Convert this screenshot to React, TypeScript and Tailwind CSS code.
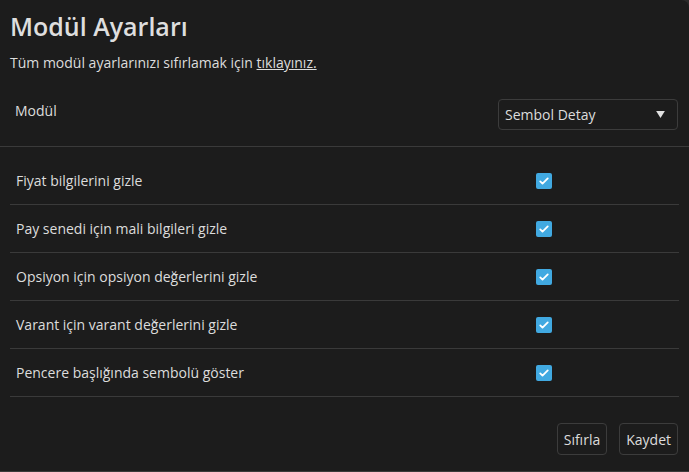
import { useState } from "react";

const ROWS = [
  "Fiyat bilgilerini gizle",
  "Pay senedi için mali bilgileri gizle",
  "Opsiyon için opsiyon değerlerini gizle",
  "Varant için varant değerlerini gizle",
  "Pencere başlığında sembolü göster",
];

function CheckBox({ checked, onChange }: { checked: boolean; onChange: () => void }) {
  return (
    <button
      type="button"
      onClick={onChange}
      className={`w-4 h-4 rounded-[2px] flex items-center justify-center ${
        checked ? "bg-[#41a9e1]" : "border border-[#666] bg-transparent"
      }`}
    >
      {checked && (
        <svg viewBox="0 0 16 16" className="w-3 h-3" fill="none" stroke="white" strokeWidth={2.4} strokeLinecap="round" strokeLinejoin="round">
          <path d="M3 8.5l3 3 7-7" />
        </svg>
      )}
    </button>
  );
}

export default function App() {
  const [checks, setChecks] = useState<boolean[]>(ROWS.map(() => true));

  const toggle = (i: number) =>
    setChecks((prev) => prev.map((c, idx) => (idx === i ? !c : c)));

  return (
    <div className="w-[689px] h-[472px] bg-[#2a2a2a]" style={{ fontFamily: '"Open Sans", sans-serif' }}>
      <div className="h-full bg-[#1c1c1c] rounded-tr-lg border-b border-[#3a3a3a] flex flex-col text-[#dcdcdc]">
        <div className="px-[10px] pt-[9px]">
          <h1 className="text-[25px] font-semibold leading-[34px] text-[#dedede]">Modül Ayarları</h1>
          <p className="text-[14px] leading-[19px] mt-[10px]">
            Tüm modül ayarlarınızı sıfırlamak için <a className="underline cursor-pointer">tıklayınız.</a>
          </p>
        </div>

        <div className="flex items-start justify-between pl-[15px] pr-[11px] mt-[27px] h-[47px]">
          <span className="text-[14px] leading-[19px] mt-[2px]">Modül</span>
          <div className="w-[180px] h-[31px] border border-[#3c3c3c] rounded-[4px] flex items-center justify-between pl-[6px] pr-[12px]">
            <span className="text-[14px]">Sembol Detay</span>
            <svg viewBox="0 0 10 8" className="w-[9px] h-[7px]" fill="#e0e0e0">
              <path d="M0 0h10L5 8z" />
            </svg>
          </div>
        </div>

        <div className="border-t border-[#3a3a3a] pt-[10px] px-[10px]">
          {ROWS.map((label, i) => (
            <div key={label} className="h-[48px] flex items-center border-b border-[#3a3a3a]">
              <span className="w-[526px] pl-[6px] text-[14px]">{label}</span>
              <CheckBox checked={checks[i]} onChange={() => toggle(i)} />
            </div>
          ))}
        </div>

        <div className="mt-auto flex justify-end gap-[12px] pr-[11px] pb-[16px]">
          <button className="h-[32px] px-[6px] border border-[#3c3c3c] rounded-[4px] text-[14px]">Sıfırla</button>
          <button className="h-[32px] px-[6px] border border-[#3c3c3c] rounded-[4px] text-[14px]">Kaydet</button>
        </div>
      </div>
    </div>
  );
}
